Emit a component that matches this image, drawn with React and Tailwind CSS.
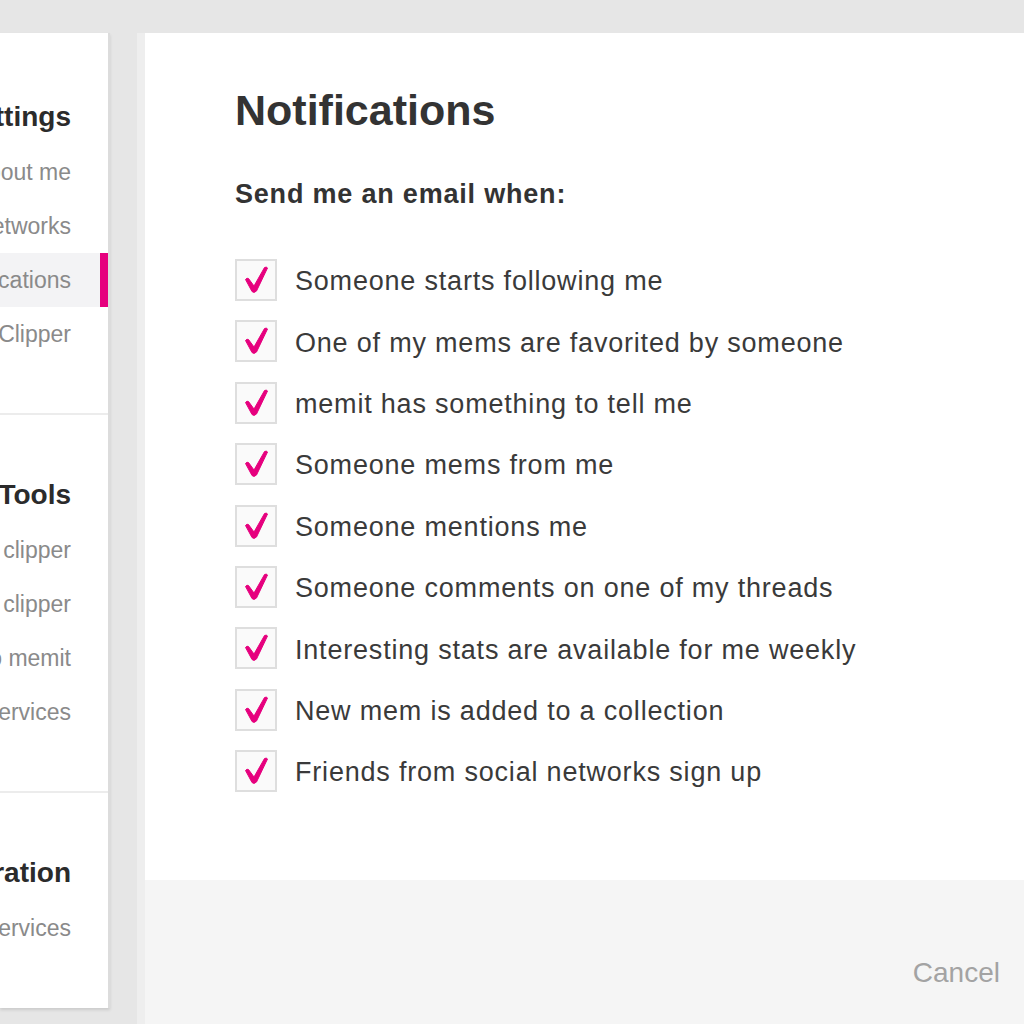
import React from 'react'

const menu = [
  {
    title: 'Account Settings',
    items: ['About me', 'Social networks', 'Notifications', 'Memit Clipper'],
    active: 'Notifications',
  },
  {
    title: 'Tools',
    items: ['Chrome clipper', 'Firefox clipper', 'Email to memit', 'Other services'],
  },
  {
    title: 'Integration',
    items: ['Connected services'],
  },
]

const options = [
  'Someone starts following me',
  'One of my mems are favorited by someone',
  'memit has something to tell me',
  'Someone mems from me',
  'Someone mentions me',
  'Someone comments on one of my threads',
  'Interesting stats are available for me weekly',
  'New mem is added to a collection',
  'Friends from social networks sign up',
]

// pink tick, drawn heavier at the bottom like the original
const Check = () => (
  <svg width="42" height="42" viewBox="0 0 42 42">
    <path
      d="M10.5 20.5 Q12 18.5 13.5 19.5 L19 27 L29.5 8.5 Q31.5 7.5 32.5 9 L21.5 32 Q19 34.5 17 32.5 Z"
      fill="#e6007e"
      stroke="#e6007e"
      strokeWidth="1"
      strokeLinejoin="round"
    />
  </svg>
)

const Sidebar = () => {
  return (
    <div className="w-[110px] h-[975px] shrink-0 bg-white border-r-2 border-[#dcdcdc] shadow-[0_2px_3px_rgba(0,0,0,0.12)] overflow-hidden">
      {menu.map((section, i) => (
        <div
          key={section.title}
          className={`pb-[52px] ${i === 0 ? 'pt-[56px]' : 'pt-[52px]'} ${i < menu.length - 1 ? 'border-b-2 border-[#ececec]' : ''}`}
        >
          <div className="h-[56px] flex items-center justify-end pr-[37px] whitespace-nowrap text-[28px] font-bold text-[#2b2b2b]">
            {section.title}
          </div>
          {section.items.map((item) => (
            <div
              key={item}
              className={`h-[54px] flex items-center justify-end pr-[37px] whitespace-nowrap text-[23px] text-[#8a8a8a] relative ${
                item === section.active ? 'bg-[#f3f3f5]' : ''
              }`}
            >
              {item === section.active && (
                <span className="absolute right-0 top-0 h-full w-[8px] bg-[#e6007e]" />
              )}
              {item}
            </div>
          ))}
        </div>
      ))}
    </div>
  )
}

export default function App() {
  return (
    <div
      className="w-[1024px] h-[1024px] overflow-hidden bg-[#e6e6e6] pt-[33px] flex"
      style={{ fontFamily: '"Liberation Sans", Arial, sans-serif' }}
    >
      <Sidebar />
      <div className="w-[27px] shrink-0" />
      <div className="w-[8px] shrink-0 bg-[#eeeeee]" />
      <div className="flex-1 bg-white flex flex-col min-h-[991px]">
        <div className="h-[847px] pl-[90px] pt-[56px]">
          <h1 className="text-[43px] leading-[42px] font-bold text-[#333]">Notifications</h1>
          <p className="mt-[47px] text-[27px] leading-[32px] font-bold text-[#333] tracking-[0.8px]">
            Send me an email when:
          </p>
          <div className="mt-[49px] flex flex-col">
            {options.map((opt) => (
              <div key={opt} className="h-[61.4px] flex items-start">
                <div className="w-[42px] h-[42px] border-2 border-[#dedede] bg-[#fafafa] box-border flex items-center justify-center">
                  <div className="-m-[2px]">
                    <Check />
                  </div>
                </div>
                <span className="ml-[18px] h-[42px] pt-[3px] flex items-center text-[27px] tracking-[0.8px] text-[#3a3a3a] whitespace-nowrap">
                  {opt}
                </span>
              </div>
            ))}
          </div>
        </div>
        <div className="flex-1 bg-[#f5f5f5] flex justify-end items-start pt-[72px] pr-[24px]">
          <span className="text-[28px] text-[#a3a3a3]">Cancel</span>
        </div>
      </div>
    </div>
  )
}
